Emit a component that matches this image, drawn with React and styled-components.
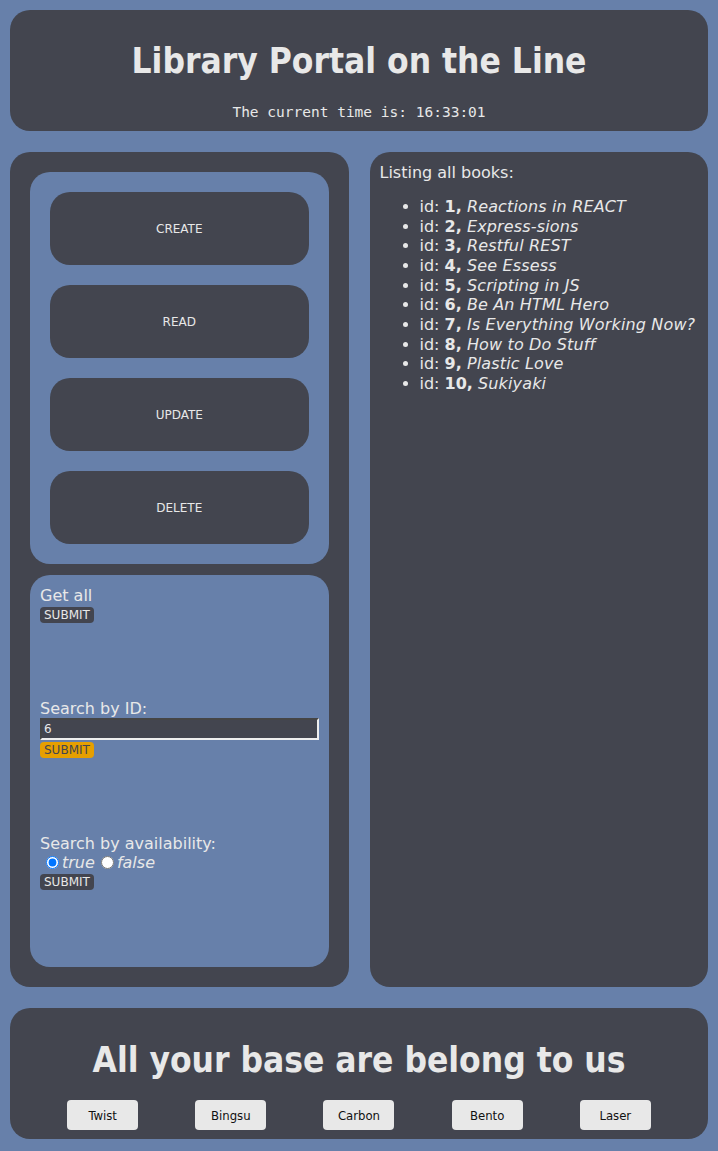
import React, { useState } from 'react';
import styled, { createGlobalStyle } from 'styled-components';

const GlobalStyle = createGlobalStyle`
  body {
    margin: 0;
    background-color: #6780aa;
    font-family: Verdana, "DejaVu Sans", sans-serif;
    color: #e8e8e8;
  }
`;

const Page = styled.div`
  display: flex;
  flex-direction: column;
  gap: 21px;
  padding: 10px 10px 12px;
`;

const Card = styled.div`
  background-color: #43454f;
  border-radius: 20px;
`;

const Header = styled(Card)`
  height: 121px;
  display: flex;
  flex-direction: column;
  align-items: center;
  box-sizing: border-box;
  padding-top: 31px;
`;

const Title = styled.h1`
  margin: 0;
  font-family: "DejaVu Sans Condensed", "DejaVu Sans", sans-serif;
  font-weight: bold;
  font-size: 35px;
  line-height: 40px;
`;

const Clock = styled.div`
  margin-top: 23px;
  font-family: "DejaVu Sans Mono", monospace;
  font-size: 14.5px;
`;

const Main = styled.div`
  display: grid;
  grid-template-columns: 1fr 1fr;
  gap: 21px;
  height: 835px;
`;

const ControlPanel = styled(Card)`
  display: grid;
  grid-template-rows: minmax(0, 1fr) minmax(0, 1fr);
  gap: 11px;
  padding: 20px;
  min-height: 0;
`;

const ListPanel = styled(Card)`
  padding: 10px;
`;

const InnerBox = styled.div`
  box-sizing: border-box;
  min-height: 0;
  background-color: #6780aa;
  border-radius: 20px;
  padding: ${p => (p.$menu ? '20px' : '11px 10px 10px')};
  display: flex;
  flex-direction: column;
  gap: ${p => (p.$menu ? '20px' : '0')};
`;

const MenuButton = styled.button`
  height: 73px;
  flex-shrink: 0;
  border: none;
  border-radius: 20px;
  background-color: #43454f;
  color: #e8e8e8;
  font-family: "DejaVu Sans", sans-serif;
  font-size: 12px;
  cursor: pointer;
`;

const Section = styled.div`
  display: flex;
  flex-direction: column;
  align-items: flex-start;
  margin-bottom: 76px;

  &:last-child {
    margin-bottom: 0;
  }
`;

const Label = styled.div`
  font-size: 16px;
  line-height: 19px;
`;

const Submit = styled.button`
  margin-top: 2px;
  padding: 0 4px;
  height: 16px;
  border: none;
  border-radius: 4px;
  background-color: ${p => (p.$accent ? '#e69f00' : '#43454f')};
  color: ${p => (p.$accent ? '#43454f' : '#e8e8e8')};
  font-family: "DejaVu Sans", sans-serif;
  font-size: 12px;
  line-height: 16px;
  cursor: pointer;
`;

const IdInput = styled.input`
  width: 100%;
  box-sizing: border-box;
  height: 22px;
  background-color: #43454f;
  color: #e8e8e8;
  border: 2px inset #999;
  border-right-color: #eee;
  border-bottom-color: #eee;
  font-family: "DejaVu Sans", sans-serif;
  font-size: 12px;
  padding: 1px 2px;
`;

const RadioRow = styled.div`
  display: flex;
  align-items: center;
  font-size: 16px;
  font-style: italic;
  line-height: 19px;
  padding-left: 5px;
`;

const Radio = styled.input`
  margin: 0 3px 0 1px;
  width: 13px;
  height: 13px;
`;

const ListTitle = styled.div`
  font-size: 16px;
  line-height: 19px;
  margin-top: 1px;
`;

const BookList = styled.ul`
  margin: 15px 0 0;
  padding-left: 40px;
  font-size: 16px;
  line-height: 19.67px;
`;

const BookId = styled.b`
  font-family: "DejaVu Sans", sans-serif;
`;

const BookName = styled.i`
  letter-spacing: 0.15px;
`;

const Footer = styled(Card)`
  height: 131px;
  box-sizing: border-box;
  padding-top: 31px;
  display: flex;
  flex-direction: column;
  align-items: center;
`;

const Slogan = styled.h2`
  margin: 0;
  font-family: "DejaVu Sans Condensed", "DejaVu Sans", sans-serif;
  font-weight: bold;
  font-size: 35px;
  line-height: 42px;
`;

const ThemeRow = styled.div`
  display: flex;
  justify-content: space-evenly;
  width: 100%;
  margin-top: 19px;
`;

const ThemeButton = styled.button`
  width: 71px;
  height: 30px;
  border: none;
  border-radius: 4px;
  background-color: #e8e8e8;
  color: #111;
  font-family: "DejaVu Sans Condensed", sans-serif;
  font-size: 13px;
  cursor: pointer;
`;

const books = [
  'Reactions in REACT',
  'Express-sions',
  'Restful REST',
  'See Essess',
  'Scripting in JS',
  'Be An HTML Hero',
  'Is Everything Working Now?',
  'How to Do Stuff',
  'Plastic Love',
  'Sukiyaki',
];

const themes = ['Twist', 'Bingsu', 'Carbon', 'Bento', 'Laser'];

const App = () => {
  const [searchId, setSearchId] = useState('6');
  const [available, setAvailable] = useState('true');

  return (
    <Page>
      <GlobalStyle />
      <Header>
        <Title>Library Portal on the Line</Title>
        <Clock>The current time is: 16:33:01</Clock>
      </Header>

      <Main>
        <ControlPanel>
          <InnerBox $menu>
            <MenuButton>CREATE</MenuButton>
            <MenuButton>READ</MenuButton>
            <MenuButton>UPDATE</MenuButton>
            <MenuButton>DELETE</MenuButton>
          </InnerBox>
          <InnerBox>
            <Section>
              <Label>Get all</Label>
              <Submit>SUBMIT</Submit>
            </Section>
            <Section>
              <Label>Search by ID:</Label>
              <IdInput value={searchId} onChange={e => setSearchId(e.target.value)} />
              <Submit $accent>SUBMIT</Submit>
            </Section>
            <Section>
              <Label>Search by availability:</Label>
              <RadioRow>
                <Radio
                  type="radio"
                  name="avail"
                  checked={available === 'true'}
                  onChange={() => setAvailable('true')}
                />
                true&nbsp;
                <Radio
                  type="radio"
                  name="avail"
                  checked={available === 'false'}
                  onChange={() => setAvailable('false')}
                />
                false
              </RadioRow>
              <Submit>SUBMIT</Submit>
            </Section>
          </InnerBox>
        </ControlPanel>

        <ListPanel>
          <ListTitle>Listing all books:</ListTitle>
          <BookList>
            {books.map((name, i) => (
              <li key={name}>
                id: <BookId>{i + 1},</BookId> <BookName>{name}</BookName>
              </li>
            ))}
          </BookList>
        </ListPanel>
      </Main>

      <Footer>
        <Slogan>All your base are belong to us</Slogan>
        <ThemeRow>
          {themes.map(t => (
            <ThemeButton key={t}>{t}</ThemeButton>
          ))}
        </ThemeRow>
      </Footer>
    </Page>
  );
};

export default App;
